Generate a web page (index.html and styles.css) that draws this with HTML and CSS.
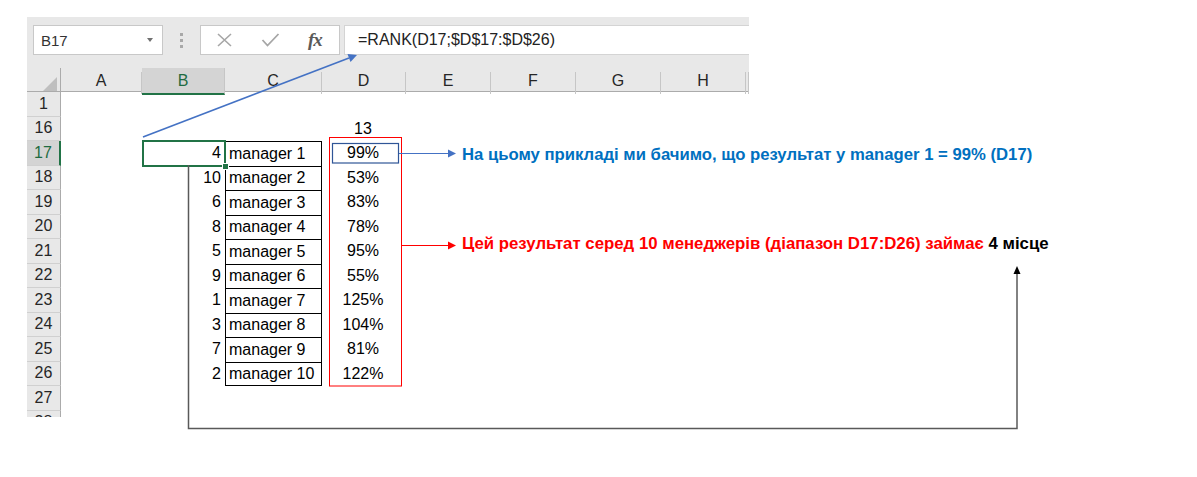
FILE: index.html
```html
<!DOCTYPE html>
<html>
<head>
<meta charset="utf-8">
<link rel="stylesheet" href="styles.css">
</head>
<body>
<div class="sheet">
  <div class="toolbar">
    <div class="namebox"><span>B17</span><span class="caret"></span></div>
    <div class="dots"><i></i><i></i><i></i></div>
    <div class="fxbox">
      <svg class="ico" width="18" height="14" viewBox="0 0 18 14"><path d="M2 1 L15 13 M15 1 L2 13" stroke="#A6A6A6" stroke-width="1.6" fill="none"/></svg>
      <svg class="ico" width="19" height="14" viewBox="0 0 19 14"><path d="M1.5 7 L6.5 12.5 L17.5 1" stroke="#A6A6A6" stroke-width="1.8" fill="none"/></svg>
      <span class="fx">fx</span>
    </div>
    <div class="formula">=RANK(D17;$D$17:$D$26)</div>
  </div>
  <div class="colheads">
    <div class="corner"><svg width="14" height="14" viewBox="0 0 14 14"><polygon points="14,0 14,14 0,14" fill="#BFBFBF"/></svg></div>
    <div class="ch">A</div>
    <div class="ch sel">B</div>
    <div class="ch">C</div>
    <div class="ch">D</div>
    <div class="ch">E</div>
    <div class="ch">F</div>
    <div class="ch">G</div>
    <div class="ch">H</div>
    <div class="ch"></div>
  </div>
  <div class="grid">
    <div class="row"><div class="rh">1</div></div>
    <div class="row"><div class="rh">16</div><div class="c a"></div><div class="c b"></div><div class="c cc"></div><div class="c d">13</div></div>
    <div class="row"><div class="rh sel">17</div><div class="c a"></div><div class="c b active">4</div><div class="c cc m">manager 1</div><div class="c d">99%</div></div>
    <div class="row"><div class="rh">18</div><div class="c a"></div><div class="c b">10</div><div class="c cc m">manager 2</div><div class="c d">53%</div></div>
    <div class="row"><div class="rh">19</div><div class="c a"></div><div class="c b">6</div><div class="c cc m">manager 3</div><div class="c d">83%</div></div>
    <div class="row"><div class="rh">20</div><div class="c a"></div><div class="c b">8</div><div class="c cc m">manager 4</div><div class="c d">78%</div></div>
    <div class="row"><div class="rh">21</div><div class="c a"></div><div class="c b">5</div><div class="c cc m">manager 5</div><div class="c d">95%</div></div>
    <div class="row"><div class="rh">22</div><div class="c a"></div><div class="c b">9</div><div class="c cc m">manager 6</div><div class="c d">55%</div></div>
    <div class="row"><div class="rh">23</div><div class="c a"></div><div class="c b">1</div><div class="c cc m">manager 7</div><div class="c d">125%</div></div>
    <div class="row"><div class="rh">24</div><div class="c a"></div><div class="c b">3</div><div class="c cc m">manager 8</div><div class="c d">104%</div></div>
    <div class="row"><div class="rh">25</div><div class="c a"></div><div class="c b">7</div><div class="c cc m">manager 9</div><div class="c d">81%</div></div>
    <div class="row"><div class="rh">26</div><div class="c a"></div><div class="c b">2</div><div class="c cc m last">manager 10</div><div class="c d">122%</div></div>
    <div class="row"><div class="rh">27</div></div>
    <div class="row"><div class="rh">28</div></div>
  </div>
</div>

<svg class="overlay" width="1197" height="477" viewBox="0 0 1197 477">
  <rect x="329.5" y="137.5" width="72" height="248.5" fill="none" stroke="#FF0000" stroke-width="1"/>
  <rect x="332.5" y="143.5" width="66" height="19.5" fill="none" stroke="#2F5597" stroke-width="1.2"/>
  <line x1="143" y1="137" x2="349" y2="58" stroke="#4472C4" stroke-width="1.6"/>
  <polygon points="357,55 347.5,54 350.5,62" fill="#4472C4"/>
  <line x1="399" y1="153.5" x2="449" y2="153.5" stroke="#4472C4" stroke-width="1.2"/>
  <polygon points="456,153.5 448,149.5 448,157.5" fill="#4472C4"/>
  <line x1="402" y1="245.5" x2="449" y2="245.5" stroke="#FF0000" stroke-width="1.2"/>
  <polygon points="456,245.5 448,241.5 448,249.5" fill="#FF0000"/>
  <polyline points="188.5,165 188.5,428.5 1017,428.5 1017,272" fill="none" stroke="#595959" stroke-width="1.5"/>
  <polygon points="1017,266 1013.5,274 1020.5,274" fill="#000"/>
</svg>

<div class="note blue">На цьому прикладі ми бачимо, що результат у manager 1 = 99% (D17)</div>
<div class="note red">Цей результат серед 10 менеджерів (діапазон D17:D26) займає <span class="blk">4 місце</span></div>
</body>
</html>
```
FILE: styles.css
```css
body {
  margin: 0;
  background: #fff;
  font-family: "Liberation Sans", Arial, sans-serif;
  width: 1197px;
  height: 477px;
  position: relative;
  overflow: hidden;
}

.sheet {
  margin: 17px 0 0 27px;
  width: 722px;
}

.toolbar {
  height: 51px;
  box-sizing: border-box;
  background: #E8E8E8;
  display: flex;
  align-items: flex-start;
  padding-top: 8px;
}

.namebox {
  margin-left: 6px;
  width: 130px;
  height: 30px;
  box-sizing: border-box;
  background: #fff;
  border: 1px solid #C8C8C8;
  display: flex;
  align-items: center;
  justify-content: space-between;
  padding: 0 9px 0 7px;
  font-size: 15px;
  color: #333;
}

.caret {
  width: 0;
  height: 0;
  border-left: 3.5px solid transparent;
  border-right: 3.5px solid transparent;
  border-top: 4px solid #707070;
}

.dots {
  margin-left: 17px;
  width: 3px;
  height: 30px;
  display: flex;
  flex-direction: column;
  justify-content: center;
  gap: 3px;
}

.dots i {
  display: block;
  width: 3px;
  height: 3px;
  background: #A8A8A8;
}

.fxbox {
  margin-left: 17px;
  width: 140px;
  height: 30px;
  box-sizing: border-box;
  background: #fff;
  border: 1px solid #C8C8C8;
  display: flex;
  align-items: center;
  padding-left: 15px;
}

.fxbox .ico {
  display: block;
}

.fxbox .ico + .ico {
  margin-left: 27px;
}

.fx {
  margin-left: 28px;
  font-family: "Liberation Serif", "Times New Roman", serif;
  font-style: italic;
  font-weight: bold;
  font-size: 19px;
  color: #5A5A5A;
  letter-spacing: -1px;
}

.formula {
  margin-left: 4px;
  flex: 1;
  height: 30px;
  box-sizing: border-box;
  background: #fff;
  border: 1px solid #D4D4D4;
  border-right: none;
  display: flex;
  align-items: center;
  padding-left: 13px;
  font-size: 16px;
  color: #222;
}

.colheads,
.row {
  display: grid;
  grid-template-columns: 34px 81px 83px 97px 84px 85px 85px 85px 85px 3px;
}

.colheads {
  height: 24px;
  background: #E8E8E8;
  box-sizing: border-box;
  border-bottom: 1px solid #ABABAB;
}

.corner {
  display: flex;
  align-items: flex-end;
  justify-content: flex-end;
  padding: 0 3px 3px 0;
  border-right: 1px solid #ABABAB;
}

.ch {
  display: flex;
  align-items: center;
  justify-content: center;
  font-size: 16px;
  color: #262626;
  border-right: 1px solid #C6C6C6;
  margin-top: 4px;
  padding-bottom: 4px;
}

.ch.sel {
  margin-top: 0;
  padding-bottom: 0;
  padding-top: 0;
  background: #D4D4D4;
  color: #1E6B41;
  border-bottom: 2px solid #217346;
  margin-bottom: -1px;
}

.grid {
  height: 325px;
  overflow: hidden;
}

.row {
  height: 24.5px;
}

.rh {
  background: #E8E8E8;
  border-right: 1px solid #ABABAB;
  border-bottom: 1px solid #D0D0D0;
  display: flex;
  align-items: center;
  justify-content: center;
  font-size: 16px;
  color: #262626;
}

.rh.sel {
  background: #D4D4D4;
  color: #1E6B41;
  border-right: 2px solid #217346;
}

.c {
  display: flex;
  align-items: center;
  font-size: 16px;
  color: #000;
}

.b {
  justify-content: flex-end;
  padding-right: 4px;
  position: relative;
}

.m {
  border-top: 1px solid #000;
  border-left: 1px solid #000;
  border-right: 1px solid #000;
  padding-left: 3px;
}

.m.last {
  border-bottom: 1px solid #000;
}

.d {
  justify-content: center;
  padding-right: 2px;
}

.active::after {
  content: "";
  position: absolute;
  left: 0;
  top: -1px;
  right: -1px;
  bottom: -1px;
  border: 2px solid #217346;
}

.active::before {
  content: "";
  position: absolute;
  right: -4px;
  bottom: -4px;
  width: 5px;
  height: 5px;
  background: #217346;
  border: 1px solid #fff;
  z-index: 2;
}

.overlay {
  position: absolute;
  left: 0;
  top: 0;
  pointer-events: none;
}

.note {
  position: absolute;
  left: 462px;
  font-weight: bold;
  line-height: 20px;
  white-space: nowrap;
}

.note.blue {
  top: 145px;
  font-size: 16.7px;
  color: #0070C0;
}

.note.red {
  top: 234px;
  font-size: 16.8px;
  color: #FF0000;
}

.blk {
  color: #000;
}
```
